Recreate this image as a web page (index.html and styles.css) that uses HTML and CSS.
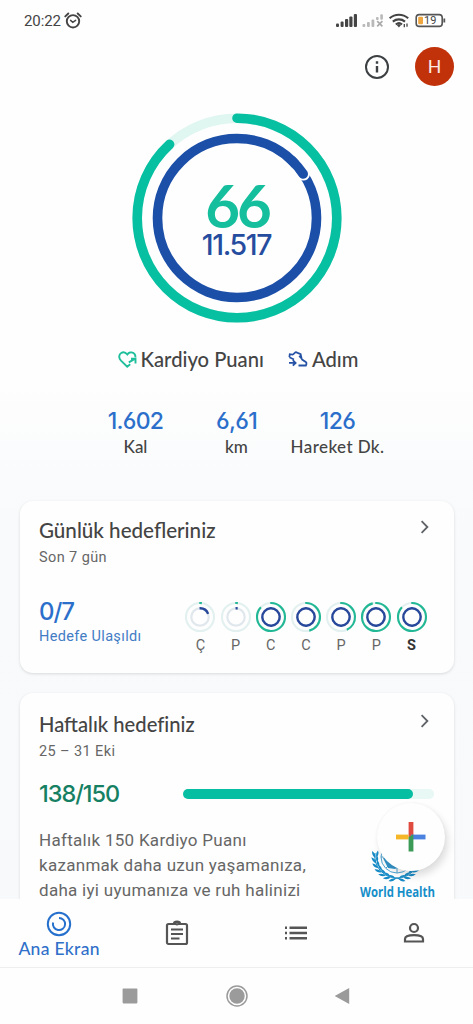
FILE: index.html
```
<!DOCTYPE html>
<html lang="tr">
<head>
<meta charset="utf-8">
<title>Ana Ekran</title>
<link rel="stylesheet" href="styles.css">
</head>
<body>
<div class="phone">
  <div class="status">
    <span class="time">20:22</span>
    <svg class="alarm" width="18" height="18" viewBox="0 0 18 18" fill="none" stroke="#444" stroke-linecap="round"><circle cx="9" cy="9.300" r="6.200" stroke-width="1.900"/><path d="M1.300 4.400 4.300 1.500M13.700 1.500l3 2.900" stroke-width="1.900"/><path d="m6.600 8.400 2.200 1.900 2.800-2" stroke-width="1.500"/></svg>
    <svg class="signals" width="112" height="18" viewBox="0 0 112 18">
      <g fill="#444"><rect x="0" y="11.500" width="3" height="3.500" rx="1"/><rect x="4.600" y="9.500" width="3" height="5.500" rx="1"/><rect x="9" y="7" width="3.200" height="8" rx="1"/><rect x="13.300" y="4.500" width="3.200" height="10.500" rx="1"/><rect x="17.800" y="2" width="3.200" height="13" rx="1"/></g>
      <g fill="#b9b9b9"><rect x="26.500" y="12" width="2.800" height="3" rx="1"/><rect x="31" y="10" width="2.800" height="5" rx="1"/><rect x="35.500" y="7.500" width="2.800" height="7.500" rx="1"/><rect x="40" y="5" width="2.600" height="3" rx="1"/><rect x="44.300" y="2.200" width="2.600" height="5.500" rx="1"/><path d="m41.200 9.200 5.200 5.200m0-5.200-5.200 5.200" stroke="#aaa" stroke-width="1.700"/></g>
      <g fill="none" stroke="#444" stroke-width="2.100"><path d="M53.600 6.200c5.400-4.700 13.200-4.700 18.600 0M56.800 9.600c3.600-3 8.600-3 12.200 0"/><path d="M59.800 12.500c1.900-1.600 4.400-1.600 6.200 0"/><path d="M68.300 12v3.300M71 11.500v3.300" stroke-width="1.300"/></g>
      <path d="m60.800 13 2.100-1 2.100 1-2.100 2.400z" fill="#444"/>
      <rect x="80.200" y="2.600" width="26" height="11.800" rx="3" fill="#fff" stroke="#555" stroke-width="1.600"/><path d="M108.300 6.500v4" stroke="#555" stroke-width="1.800"/>
      <rect x="82.200" y="4.700" width="4.800" height="7.600" rx="1" fill="#f0a63f"/>
      <text x="88" y="12.300" class="pct">19</text>
    </svg>
  </div>
  <header class="top">
    <svg width="26" height="26" viewBox="0 0 26 26" fill="none" stroke="#3c4043" stroke-width="2"><circle cx="13" cy="13" r="11"/><path d="M13 12v6.400M13 7.300v2.400" stroke-width="2.400"/></svg>
    <span class="avatar">H</span>
  </header>
  <div class="ring">
    <svg width="212" height="212" viewBox="-106 -106 212 212" fill="none" stroke-width="9.600" stroke-linecap="round">
      <circle r="99.800" stroke="#e0f6f0"/>
      <circle r="99.800" stroke="#06c0a1" pathLength="100" stroke-dasharray="88.200 100" transform="rotate(-90)"/>
      <circle r="79.500" stroke="#1b4fa8"/>
      <path d="M61.600-50.300 66.500-44" stroke="#fff" stroke-width="13"/>
      <path d="M55-57.400A79.500 79.500 0 0 1 66.200-44" stroke="#1b4fa8"/>
    </svg>
    <div class="ring-text"><span class="points">66</span><span class="steps">11.517</span></div>
  </div>
  <div class="legend">
    <span class="item"><svg width="19" height="17" viewBox="0 0 19 17" fill="none" stroke="#1fbf9c" stroke-width="1.900"><path d="M12.200 13.300 9.200 15.700 3 9.700C.4 7 .8 3.500 3.200 2c2.300-1.400 4.600-.4 6.100 1.500 1.400-1.900 4-2.900 6.200-1.500 1.500 1 2.100 2.600 1.800 4.300"/><path d="m10.800 11.400 6-3.500M13 7.700h4.500v4.800"/></svg><span>Kardiyo Puanı</span></span>
    <span class="item"><svg width="20" height="17" viewBox="0 0 20 17" fill="none" stroke="#2552a5" stroke-width="1.800"><path d="M1.400 6.200 1.800 3.200 4.500 3.600C6 3.500 6.300 1.400 8 1.200l4.600 2 .9 4.100M11.200 4.800l2.300 2.600c.3 2.600 4.300 2.200 4.900 4.400.2.900.1 1.700-.5 2.700H10.500M1.400 6.200l4.600 2.300"/><path d="M1 11.800h6.400M4.800 9.200l2.800 2.700-2.800 2.800"/></svg><span>Adım</span></span>
  </div>
  <div class="stats">
    <div class="stat"><b>1.602</b><span>Kal</span></div>
    <div class="stat"><b>6,61</b><span>km</span></div>
    <div class="stat"><b>126</b><span class="wide">Hareket Dk.</span></div>
  </div>
  <section class="card daily">
    <div class="head"><h2 class="t1">Günlük hedefleriniz</h2><svg width="10" height="14" viewBox="0 0 10 14" fill="none" stroke="#5f6368" stroke-width="1.800"><path d="m1.600 1.200 5.800 5.800-5.800 5.800"/></svg></div>
    <p class="sub">Son 7 gün</p>
    <div class="row">
      <div class="reach"><b>0/7</b><span>Hedefe Ulaşıldı</span></div>
      <div class="days" id="days"></div>
    </div>
  </section>
  <section class="card weekly">
    <div class="head"><h2 class="t2">Haftalık hedefiniz</h2><svg width="10" height="14" viewBox="0 0 10 14" fill="none" stroke="#5f6368" stroke-width="1.800"><path d="m1.600 1.200 5.800 5.800-5.800 5.800"/></svg></div>
    <p class="sub">25 – 31 Eki</p>
    <div class="progress"><b>138/150</b><div class="track"><div class="fill" style="width:92%"></div></div></div>
    <div class="info">
      <p>Haftalık 150 Kardiyo Puanı<br>kazanmak daha uzun yaşamanıza,<br>daha iyi uyumanıza ve ruh halinizi</p>
      <svg class="who" width="78" height="70" viewBox="0 0 78 70">
        <g fill="none" stroke="#4ba3d1" stroke-width="1"><circle cx="38" cy="26" r="16"/><circle cx="38" cy="26" r="11"/><circle cx="38" cy="26" r="6"/><path d="M38 10v32M22 26h32M27 15l22 22M49 15 27 37"/></g>
        <path d="M24 27l5-1 3 6 5-1 3 4-4 3-7-1zM44 33l7-2-2 6-5 2z" fill="#3094ca"/>
        <g id="branch" fill="#168ac5">
          <path d="M16 22A22 22 0 0 0 38 47l6 2.500" fill="none" stroke="#168ac5"/>
          <g id="leaf"><path d="M37 47.500q-3 3.800-7.500 2.600 3-3.500 7.500-2.600zM36 46.500q-2-3.300-6.500-2.300 2.500 3 6.500 2.300z"/></g>
          <use href="#leaf" transform="rotate(14 38 26)"/><use href="#leaf" transform="rotate(28 38 26)"/><use href="#leaf" transform="rotate(42 38 26)"/><use href="#leaf" transform="rotate(56 38 26)"/><use href="#leaf" transform="rotate(70 38 26)"/><use href="#leaf" transform="rotate(84 38 26)"/>
        </g>
        <use href="#branch" transform="matrix(-1 0 0 1 76 0)"/>
        <text x="1" y="65.500" textLength="75" lengthAdjust="spacingAndGlyphs" class="who-name">World Health</text>
      </svg>
    </div>
    <div class="fab"><svg width="30" height="30" viewBox="0 0 30 30"><path d="M12.600 0h4.800v15h-4.800z" fill="#df4c3f"/><path d="M0 12.600h12.600v4.800H0z" fill="#f5b728"/><path d="M15 12.600h14.500v4.800H15z" fill="#4b82e0"/><path d="M12.600 15l4.800-2.400V29.500h-4.800z" fill="#3b9a55"/></svg></div>
  </section>
  <nav class="tabs">
    <div class="tab active"><svg width="26" height="26" viewBox="0 0 26 26" fill="none" stroke="#2670cd" stroke-width="2"><circle cx="13" cy="13" r="11.200"/><path d="M13 6.900A6.100 6.100 0 1 1 7.100 11.500"/></svg><span>Ana Ekran</span></div>
    <div class="tab"><svg width="24" height="26" viewBox="0 0 24 26" fill="none" stroke="#555" stroke-width="2.200"><rect x="2" y="4" width="20" height="20" rx="1.500"/><path d="M6 9.500h12M6 14h12M6 18.500h8.500" stroke-width="2"/><path d="M8 3.800h8V3a4 2.500 0 0 0-8 0z" fill="#555" stroke="none"/><circle cx="12" cy="3.300" r="1.300" fill="#fff" stroke="#555" stroke-width="1.800"/></svg></div>
    <div class="tab"><svg width="24" height="16" viewBox="0 0 24 16" fill="#555"><path d="M1 1.500h2v2.500H1zM1 6.700h2v2.500H1zM1 12h2v2.500H1zM5.500 1.500H23V4H5.500zM5.500 6.700H23v2.500H5.500zM5.500 12H23v2.500H5.500z"/></svg></div>
    <div class="tab"><svg width="22" height="22" viewBox="0 0 22 22" fill="none" stroke="#555" stroke-width="2.200"><circle cx="11" cy="6" r="4"/><path d="M2 19.500V17c0-5.300 18-5.300 18 0v2.500z"/></svg></div>
  </nav>
  <div class="system">
    <svg width="22" height="22" viewBox="0 0 22 22"><rect x="3.600" y="3.600" width="14.800" height="14.800" rx=".8" fill="#9b9b9b"/></svg>
    <svg width="22" height="22" viewBox="0 0 22 22"><circle cx="11" cy="11" r="10" fill="none" stroke="#9b9b9b" stroke-width="1.500"/><circle cx="11" cy="11" r="7.700" fill="#9b9b9b"/></svg>
    <svg width="22" height="22" viewBox="0 0 22 22"><path d="M1.700 11 16.200 3v16z" fill="#9b9b9b"/></svg>
  </div>
</div>
<script src="days.js"></script>
</body>
</html>
```
FILE: days.js
```
// Each day: label, cardio share of the outer ring, step share of the inner ring.
const days = [["Ç", 0.03, 0.2], ["P", 0.03, 0.04], ["C", 0.88, 1], ["C", 0.47, 1], ["P", 0.44, 1], ["P", 0.97, 1], ["S", 0.88, 1]];
const arc = (r, part, color, width) =>
  `<circle r="${r}" stroke="${color}" stroke-width="${width}" pathLength="100" stroke-dasharray="${part * 100} 100" transform="rotate(-93)"/>`;
document.getElementById("days").innerHTML = days.map(([label, cardio, steps], i) =>
  `<div class="day${i === 6 ? " today" : ""}"><svg width="32" height="32" viewBox="-16 -16 32 32" fill="none">` +
  `<circle r="14" stroke="#e2f0ef" stroke-width="2.1"/><circle r="8.7" stroke="#e1e8ed" stroke-width="2.2"/>` +
  arc(14, cardio, "#22b895", 2.1) + arc(8.7, steps, "#28489b", 2.4) + `</svg><span>${label}</span></div>`).join("");
```
FILE: styles.css
```
* { box-sizing: border-box; }
body { margin: 0; font-family: Roboto, "Liberation Sans", sans-serif; color: #444; }
h2, p { margin: 0; font-weight: 400; }
svg { display: block; flex: none; }
.phone { width: 473px; height: 1024px; overflow: hidden; display: flex; flex-direction: column; background: linear-gradient(#fefefe 0, #fefefe 370px, #f8fafb 530px, #f7f9fb 100%); }
.status { height: 42px; padding: 12px 25px 0 24px; display: flex; }
.time { font-size: 15px; line-height: 18px; letter-spacing: -.1px; width: 40px; color: #444; }
.signals { margin-left: auto; }
.pct { font: 11px Roboto, sans-serif; fill: #444; }
.top { height: 48px; padding: 5px 19px 0 0; display: flex; justify-content: flex-end; gap: 25px; align-items: flex-start; }
.top svg { margin-top: 7px; }
.avatar { width: 39px; height: 39px; border-radius: 50%; background: #c1320b; color: #fbe9e3; font-size: 19px; line-height: 39px; text-align: center; }
.ring { height: 236px; padding-top: 22px; display: grid; justify-content: center; }
.ring > * { grid-area: 1 / 1; }
.ring-text { display: flex; flex-direction: column; align-items: center; padding-top: 68px; }
.points { font: 700 60px/50px Lato, sans-serif; letter-spacing: -3px; margin-right: -1px; color: #15bf9d; }
.steps { font: 500 28.500px/30px Inter, sans-serif; font-feature-settings: "ss01"; letter-spacing: -1.400px; color: #264c9f; }
.legend { height: 80px; padding: 21px 0 0 3px; display: flex; justify-content: center; align-items: flex-start; gap: 24px; font: 500 20.200px/24px Lato, sans-serif; }
.item { display: flex; gap: 4px; align-items: center; }
.stats { height: 95px; display: grid; grid-template-columns: 101px 101px 101px; justify-content: center; }
.stat { display: flex; flex-direction: column; align-items: center; white-space: nowrap; }
.stat b { font: 500 23px/30px Inter, sans-serif; font-feature-settings: "ss01"; letter-spacing: -.700px; color: #2b6fcb; }
.stat span { font: 500 17px/22px Lato, sans-serif; }
.stat .wide { letter-spacing: .4px; }
.card { width: 434px; margin: 0 20px 20px 19.500px; padding: 0 20px 0 19.500px; border-radius: 13px; background: #fefefe; box-shadow: 0 1px 3px rgba(60,64,67,.17); flex: none; }
.daily { height: 172px; }
.head { display: flex; justify-content: space-between; padding-top: 17px; }
.head svg { margin: 2px 4px 0 0; }
.head h2 { line-height: 24px; font-family: Lato, sans-serif; font-weight: 500; }
.t1 { font-size: 20.600px; }
.t2 { font-size: 20.200px; }
.sub { font-size: 14.500px; line-height: 18px; letter-spacing: .4px; margin-top: 7px; color: #666; }
.row { display: flex; justify-content: space-between; padding-top: 31px; }
.reach { display: flex; flex-direction: column; }
.reach b { font: 500 24px/28px Inter, sans-serif; letter-spacing: -1px; color: #2b6fcb; }
.reach span { font-size: 14.500px; line-height: 18px; margin-top: 2px; letter-spacing: .35px; color: #427cc5; }
.days { display: flex; gap: 3.200px; margin: 3px 6px 0 0; }
.day { width: 32px; text-align: center; font-size: 14.500px; line-height: 18px; color: #666; }
.day span { display: block; margin-top: 4px; }
.today { font-weight: 700; color: #333; }
.weekly { height: 206px; margin-bottom: 0; border-radius: 13px 13px 0 0; position: relative; }
.weekly .head { padding-top: 19px; }
.progress { display: flex; align-items: center; justify-content: space-between; height: 30px; margin-top: 18px; }
.progress b { font: 500 23.500px/30px Inter, sans-serif; letter-spacing: -1.050px; color: #168063; }
.track { width: 251px; height: 10px; border-radius: 5px; background: #e7f8f5; }
.fill { height: 10px; border-radius: 5px; background: #06bea2; }
.info { display: flex; justify-content: space-between; height: 90px; padding-top: 19px; }
.info p { font-size: 17px; line-height: 25px; letter-spacing: .29px; white-space: nowrap; color: #666; }
.who { margin: 3px -3px 0 0; }
.who-name { font: 700 15px "Open Sans", sans-serif; fill: #168fc9; }
.fab { position: absolute; top: 110px; left: 357px; width: 68px; height: 68px; border-radius: 50%; background: #fefefe; display: grid; place-items: center; box-shadow: 3px 5px 7px rgba(60,64,67,.16), 0 0 3px rgba(60,64,67,.06); }
.tabs { height: 69px; flex: none; display: grid; grid-template-columns: repeat(4, 118.250px); background: #fefefe; position: relative; border-bottom: 1px solid #eee; }
.tab { display: grid; place-items: center; }
.tab.active { align-content: start; padding-top: 12px; }
.tab.active span { font: 500 17.500px/22px Lato, sans-serif; letter-spacing: .3px; color: #2f70c9; margin-top: 1px; }
.system { height: 56px; flex: none; display: flex; justify-content: center; align-items: center; gap: 85px; background: #fefefe; }
```
